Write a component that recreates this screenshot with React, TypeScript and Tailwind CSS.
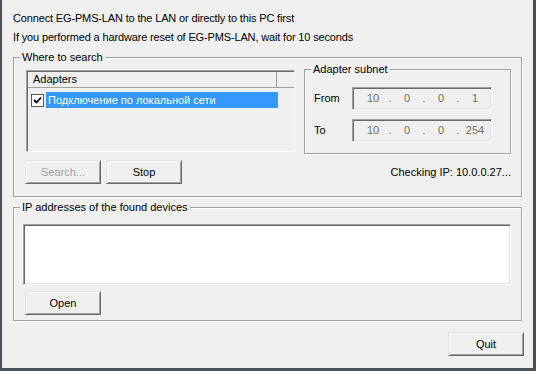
import type { ReactNode } from "react";

const FONT = { fontFamily: '"Liberation Sans", Arial, sans-serif' };

function GroupBox({ label, className, children }: { label: string; className?: string; children: ReactNode }) {
  return (
    <div className={"relative border border-[#a0a0a0] shadow-[inset_1px_1px_0_#ffffff,1px_1px_0_#ffffff] " + (className ?? "")}>
      <span className="absolute top-[-7px] left-[6px] bg-[#f0f0f0] px-[2px] leading-[13px] text-black">{label}</span>
      {children}
    </div>
  );
}

function Button({ children, disabled, className }: { children: ReactNode; disabled?: boolean; className?: string }) {
  return (
    <div
      className={
        "flex h-[24px] w-[76px] items-center justify-center bg-[#f0f0f0] leading-[13px] border-t border-l border-[#e3e3e3] border-r border-b border-r-[#696969] border-b-[#696969] shadow-[inset_1px_1px_0_#ffffff,inset_-1px_-1px_0_#a0a0a0] " +
        (disabled ? "text-[#a0a0a0] " : "text-black ") +
        (className ?? "")
      }
    >
      {children}
    </div>
  );
}

function IpField({ parts }: { parts: string[] }) {
  return (
    <div className="flex h-[23px] w-[140px] items-center border-t border-l border-[#a0a0a0] border-r border-b border-r-white border-b-white shadow-[inset_1px_1px_0_#696969,inset_-1px_-1px_0_#e3e3e3] bg-[#f0f0f0] pl-[10px] text-[#6d6d6d]">
      {parts.map((p, i) => (
        <span key={i} className="flex">
          <span className="w-[20px] text-center">{p}</span>
          {i < parts.length - 1 && <span className="w-[14px] text-center">.</span>}
        </span>
      ))}
    </div>
  );
}

export default function App() {
  return (
    <div
      style={FONT}
      className="flex h-[371px] w-[536px] flex-col bg-[#f0f0f0] text-[11px] text-black border-l-2 border-b-[3px] border-r-[3px] border-[#4a5058]"
    >
      <div className="pl-[11px] pt-[12px] leading-[13px] tracking-[-0.15px]">
        <div>Connect EG-PMS-LAN to the LAN or directly to this PC first</div>
        <div className="mt-[6px]">If you performed a hardware reset of EG-PMS-LAN, wait for 10 seconds</div>
      </div>

      <GroupBox label="Where to search" className="ml-[11px] mt-[13px] w-[509px] pl-[12px] pr-[10px] pt-[12px] pb-[12px]">
        <div className="flex h-[82px] items-start">
          {/* adapters list */}
          <div className="h-[82px] w-[270px] border-t border-l border-[#a0a0a0] border-r border-b border-r-white border-b-white shadow-[inset_1px_1px_0_#696969] bg-[#f0f0f0]">
            <div className="ml-[1px] mt-[1px] flex h-[16px] border-b border-[#a0a0a0] leading-[13px]">
              <div className="flex w-[249px] items-center border-r border-[#a0a0a0] pl-[5px]">Adapters</div>
            </div>
            <div className="mt-[4px] flex h-[16px] items-center pl-[4px]">
              <div className="flex h-[13px] w-[13px] items-center justify-center border border-[#555] bg-white">
                <svg width="9" height="9" viewBox="0 0 9 9">
                  <path d="M1 4 L3.5 6.5 L8 1.5" fill="none" stroke="#000" strokeWidth="1.8" />
                </svg>
              </div>
              <div className="ml-[2px] flex h-[16px] w-[232px] items-center bg-[#3399ff] pl-[2px] text-white">
                Подключение по локальной сети
              </div>
            </div>
          </div>

          {/* subnet */}
          <GroupBox label="Adapter subnet" className="ml-[9px] mt-[-1px] h-[85px] w-[207px] shrink-0 pl-[9px] pt-[17px]">
            <div className="flex items-center">
              <span className="w-[38px]">From</span>
              <IpField parts={["10", "0", "0", "1"]} />
            </div>
            <div className="mt-[9px] flex items-center">
              <span className="w-[38px]">To</span>
              <IpField parts={["10", "0", "0", "254"]} />
            </div>
          </GroupBox>
        </div>

        <div className="mt-[8px] flex items-center">
          <Button disabled className="ml-[-1px]">Search...</Button>
          <Button className="ml-[5px]">Stop</Button>
          <span className="ml-auto leading-[13px]">Checking IP: 10.0.0.27...</span>
        </div>
      </GroupBox>

      <GroupBox label="IP addresses of the found devices" className="ml-[11px] mt-[10px] w-[509px] pl-[9px] pt-[16px] pb-[5px]">
        <div className="h-[61px] w-[488px] border-t border-l border-[#a0a0a0] border-r border-b border-r-white border-b-white shadow-[inset_1px_1px_0_#696969,inset_-1px_-1px_0_#e3e3e3] bg-white" />
        <Button className="ml-[2px] mt-[6px]">Open</Button>
      </GroupBox>

      <div className="mt-[11px] flex justify-end pr-[9px]">
        <Button>Quit</Button>
      </div>
    </div>
  );
}
